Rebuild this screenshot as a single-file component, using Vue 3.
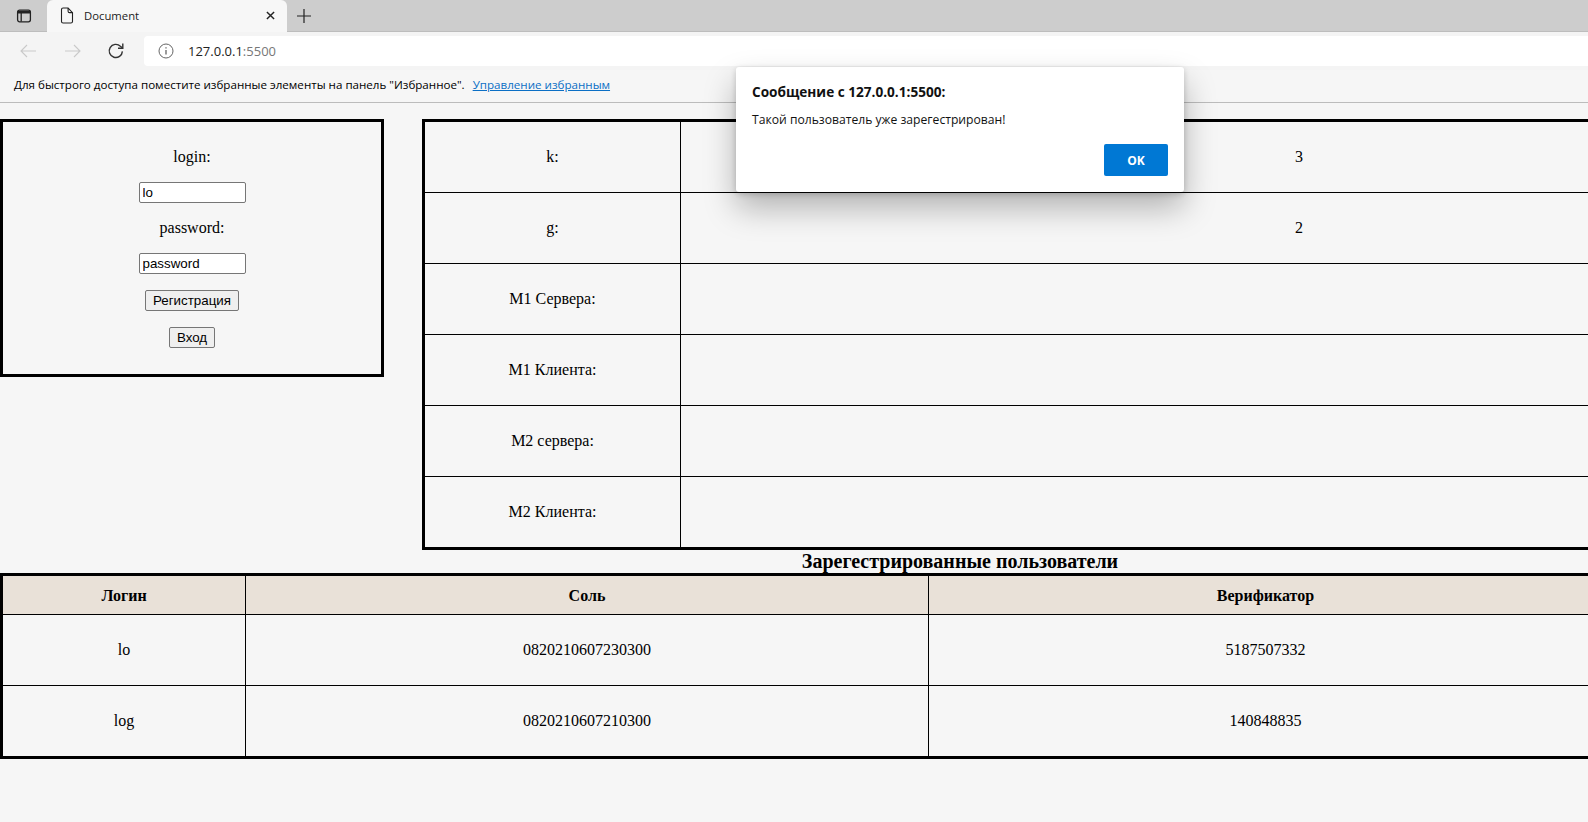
<template>
  <div class="window">
    <!-- browser chrome -->
    <div class="tabstrip">
      <div class="tab-actions">
        <svg width="16" height="16" viewBox="0 0 16 16" fill="none" stroke="#222" stroke-width="1.3">
          <rect x="1.6" y="2.2" width="12.8" height="11.6" rx="2" />
          <path d="M1.6 4.2h12.8" stroke-width="2.6" />
          <path d="M5.2 4.6v9" />
        </svg>
      </div>
      <div class="tab">
        <svg width="14" height="17" viewBox="0 0 14 17" fill="none" stroke="#222" stroke-width="1.1">
          <path d="M1.5 2.6a1.6 1.6 0 0 1 1.6-1.6h5l4.4 4.6v8.8a1.6 1.6 0 0 1-1.6 1.6H3.1a1.6 1.6 0 0 1-1.6-1.6z" />
          <path d="M8.1 1v3.2a1.4 1.4 0 0 0 1.4 1.4h3" />
        </svg>
        <span class="tab-title">Document</span>
        <svg class="tab-close" width="9" height="9" viewBox="0 0 10 10" stroke="#222" stroke-width="1.6">
          <path d="M1 1l8 8M9 1l-8 8" />
        </svg>
      </div>
      <svg class="new-tab" width="14" height="14" viewBox="0 0 14 14" stroke="#222" stroke-width="1.2">
        <path d="M7 0v14M0 7h14" />
      </svg>
    </div>

    <div class="toolbar">
      <svg width="17" height="14" viewBox="0 0 17 14" fill="none" stroke="#c9c9c9" stroke-width="1.1">
        <path d="M16 7H1M7 1L1 7l6 6" />
      </svg>
      <svg class="forward" width="17" height="14" viewBox="0 0 17 14" fill="none" stroke="#c9c9c9" stroke-width="1.1">
        <path d="M1 7h15M10 1l6 6-6 6" />
      </svg>
      <svg class="reload" width="18" height="18" viewBox="0 0 18 18" fill="none" stroke="#333" stroke-width="1.4">
        <path d="M15.4 9.4a6.6 6.6 0 1 1-2-5.2L15.6 6" />
        <path d="M15.8 1.4V6.2H11" />
      </svg>
      <div class="address">
        <svg width="16" height="16" viewBox="0 0 16 16" fill="none" stroke="#666" stroke-width="1">
          <circle cx="8" cy="8" r="7" />
          <path d="M8 7v4.6M8 4.2v1.3" stroke-width="1.3" />
        </svg>
        <span class="url">127.0.0.1<span class="port">:5500</span></span>
      </div>
    </div>

    <div class="favbar">
      <span>Для быстрого доступа поместите избранные элементы на панель "Избранное".</span>
      <a class="favlink">Управление избранным</a>
    </div>

    <!-- page -->
    <div class="page">
      <div class="top">
        <div class="login-box">
          <div>login:</div>
          <input class="field" type="text" value="lo" />
          <div>password:</div>
          <input class="field" type="text" value="password" />
          <button class="btn">Регистрация</button>
          <button class="btn">Вход</button>
        </div>

        <table class="params">
          <tbody>
            <tr v-for="row in params" :key="row.name">
              <td class="name">{{ row.name }}</td>
              <td>{{ row.value }}</td>
            </tr>
          </tbody>
        </table>
      </div>

      <h3 class="users-title">Зарегестрированные пользователи</h3>

      <table class="users">
        <thead>
          <tr>
            <th class="col-login">Логин</th>
            <th class="col-salt">Соль</th>
            <th>Верификатор</th>
          </tr>
        </thead>
        <tbody>
          <tr v-for="user in users" :key="user.login">
            <td>{{ user.login }}</td>
            <td>{{ user.salt }}</td>
            <td>{{ user.verifier }}</td>
          </tr>
        </tbody>
      </table>
    </div>

    <!-- alert() dialog -->
    <div class="dialog">
      <div class="dialog-title">Сообщение с 127.0.0.1:5500:</div>
      <div class="dialog-text">Такой пользователь уже зарегестрирован!</div>
      <div class="dialog-actions">
        <button class="dialog-ok">OK</button>
      </div>
    </div>
  </div>
</template>

<script setup>
const params = [
  { name: 'k:', value: '3' },
  { name: 'g:', value: '2' },
  { name: 'M1 Сервера:', value: '' },
  { name: 'M1 Клиента:', value: '' },
  { name: 'M2 сервера:', value: '' },
  { name: 'M2 Клиента:', value: '' }
]

const users = [
  { login: 'lo', salt: '0820210607230300', verifier: '5187507332' },
  { login: 'log', salt: '0820210607210300', verifier: '140848835' }
]
</script>

<style>
html,
body {
  margin: 0;
  background: #f6f6f6;
  overflow: hidden;
}
</style>

<style scoped>
.window {
  position: relative;
  width: 1588px;
  height: 822px;
  overflow: hidden;
  background: #f6f6f6;
  font-family: "Liberation Serif", serif;
  font-size: 16px;
  color: #000;
}

/* chrome */
.tabstrip {
  display: flex;
  align-items: center;
  height: 32px;
  background: #cdcdcd;
  box-shadow: inset 0 -1px 0 #bdbdbd;
}
.tab-actions {
  display: flex;
  justify-content: center;
  width: 47px;
}
.tab {
  display: flex;
  align-items: center;
  box-sizing: border-box;
  width: 240px;
  height: 32px;
  padding: 0 12px 1px 13px;
  background: #f7f7f7;
  border-radius: 6px 6px 0 0;
  font-family: "Open Sans", sans-serif;
  font-size: 11.3px;
  color: #222;
}
.tab-title {
  flex: 1;
  margin-left: 10px;
}
.new-tab {
  margin-left: 10px;
}
.toolbar {
  display: flex;
  align-items: center;
  height: 38px;
  padding-left: 20px;
  background: #f4f4f4;
}
.forward {
  margin-left: 27px;
}
.reload {
  margin-left: 26px;
}
.address {
  display: flex;
  align-items: center;
  flex: 1;
  height: 30px;
  margin-left: 19px;
  padding-left: 14px;
  background: #fff;
  border-radius: 4px 0 0 4px;
  font-family: "Open Sans", sans-serif;
  font-size: 13px;
}
.url {
  margin-left: 14px;
  color: #222;
}
.port {
  color: #777;
}
.favbar {
  display: flex;
  align-items: center;
  gap: 8px;
  box-sizing: border-box;
  height: 33px;
  padding: 0 0 4px 14px;
  background: #f6f6f6;
  border-bottom: 1px solid #bcbcbc;
  font-family: "Open Sans", sans-serif;
  font-size: 11.6px;
  color: #000;
}
.favlink {
  color: #0b6fc5;
  text-decoration: underline;
}

/* page */
.page {
  width: 1920px;
  padding-top: 16px;
}
.top {
  display: flex;
  align-items: flex-start;
  gap: 38px;
}
.login-box {
  display: flex;
  flex-direction: column;
  align-items: center;
  gap: 16px;
  box-sizing: border-box;
  width: 384px;
  padding: 26px 0;
  border: 3px solid #000;
  line-height: 18px;
}
.field {
  box-sizing: border-box;
  width: 107px;
  height: 21px;
  padding: 1px 3px;
  margin: 0;
  background: #fff;
  border: 1px solid #767676;
  border-radius: 2px;
  font-family: "Liberation Sans", sans-serif;
  font-size: 13.33px;
  color: #000;
}
.btn {
  box-sizing: border-box;
  height: 21px;
  padding: 1px 7px;
  margin: 0;
  background: #efefef;
  border: 1px solid #767676;
  border-radius: 2px;
  font-family: "Liberation Sans", sans-serif;
  font-size: 13.33px;
  color: #000;
}
.params {
  width: 1498px;
  border: 3px solid #000;
  border-collapse: collapse;
}
.params td {
  height: 70px;
  padding: 0;
  border: 1px solid #000;
  text-align: center;
}
.params .name {
  width: 255px;
}
.users-title {
  margin: 0 0 1px;
  font-size: 20px;
  line-height: 22px;
  text-align: center;
}
.users {
  width: 1605px;
  border: 3px solid #000;
  border-collapse: collapse;
}
.users th {
  box-sizing: border-box;
  height: 40px;
  padding: 1px 0 0;
  border: 1px solid #000;
  background: #e9e1d8;
}
.users td {
  height: 70px;
  padding: 0;
  border: 1px solid #000;
  text-align: center;
}
.col-login {
  width: 244px;
}
.col-salt {
  width: 683px;
}

/* alert */
.dialog {
  position: absolute;
  top: 67px;
  left: 736px;
  box-sizing: border-box;
  width: 448px;
  height: 125px;
  padding: 16px;
  background: #fff;
  border-radius: 3px;
  box-shadow: 0 16px 32px rgba(0, 0, 0, 0.28), 0 2px 6px rgba(0, 0, 0, 0.18);
  font-family: "Open Sans", sans-serif;
  color: #111;
}
.dialog-title {
  font-size: 13.6px;
  font-weight: 700;
  line-height: 18px;
}
.dialog-text {
  margin-top: 10px;
  font-size: 12.15px;
  line-height: 18px;
}
.dialog-actions {
  display: flex;
  justify-content: flex-end;
  margin-top: 15px;
}
.dialog-ok {
  width: 64px;
  height: 32px;
  padding: 0;
  background: #0078d4;
  border: none;
  border-radius: 2px;
  font-family: "Open Sans", sans-serif;
  font-size: 12px;
  font-weight: 700;
  color: #fff;
}
</style>
